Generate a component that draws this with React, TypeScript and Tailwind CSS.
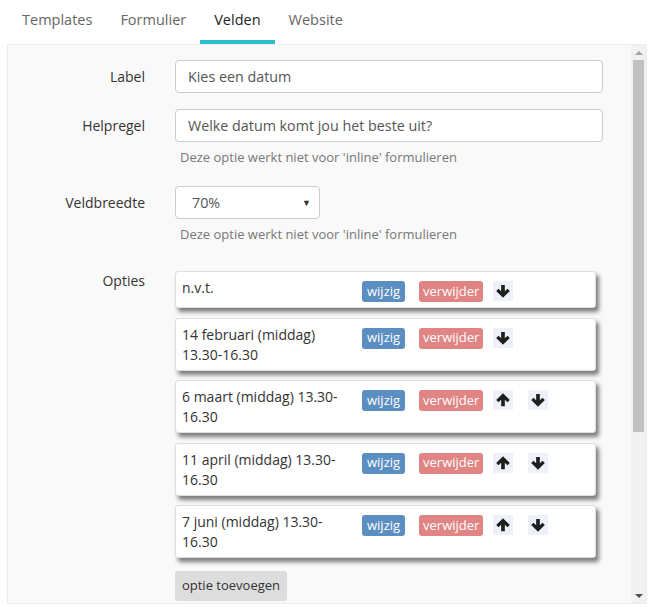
import React from 'react'

const tabs = ['Templates', 'Formulier', 'Velden', 'Website']

type Option = { text: string; up: boolean; down: boolean }

const options: Option[] = [
    { text: 'n.v.t.', up: false, down: true },
    { text: '14 februari (middag) 13.30-16.30', up: false, down: true },
    { text: '6 maart (middag) 13.30-16.30', up: true, down: true },
    { text: '11 april (middag) 13.30-16.30', up: true, down: true },
    { text: '7 juni (middag) 13.30-16.30', up: true, down: true },
]

const Arrow = ({ dir }: { dir: 'up' | 'down' }) => (
    <span className="flex h-[20px] w-[20px] items-center justify-center bg-[#eef2f8]">
        <svg width="14" height="14" viewBox="0 0 16 16" className={dir === 'up' ? 'rotate-180' : ''}>
            <path d="M5.9 1h4.2v7.3l3-3 2.7 2.7L8 15.8 0.2 8l2.7-2.7 3 3z" fill="#1f1f1f" />
        </svg>
    </span>
)

const Row = ({ label, children, top = 'pt-[7px]' }: { label: string; children: React.ReactNode; top?: string }) => (
    <div className="flex">
        <div className={`w-[137px] shrink-0 text-right text-[14px] leading-[20px] text-[#333] ${top}`}>{label}</div>
        <div className="ml-[30px] w-[428px]">{children}</div>
    </div>
)

const Help = () => (
    <p className="mt-[6px] pl-[5px] text-[13px] leading-[18px] text-[#777]">
        Deze optie werkt niet voor 'inline' formulieren
    </p>
)

const Input = ({ value }: { value: string }) => (
    <div className="flex h-[33px] items-center rounded-[4px] border border-[#ccc] bg-white px-[12px] text-[14.3px] text-[#555]">
        {value}
    </div>
)

const OptionCard = ({ opt }: { opt: Option }) => (
    <div className="flex w-[421px] rounded-[3px] border border-[#ddd] bg-white px-[6px] pt-[6px] pb-[5px] shadow-[3px_4px_4px_rgba(0,0,0,0.5)]">
        <div className="w-[170px] shrink-0 text-[14px] leading-[20px] text-[#333]">{opt.text}</div>
        <div className="ml-[10px] mt-[3px] flex items-start">
            <span className="flex h-[21px] items-center rounded-[3px] bg-[#5b8ec1] px-[5px] text-[13px] text-white">wijzig</span>
            <span className="ml-[14px] flex h-[21px] items-center rounded-[3px] bg-[#e08484] px-[4px] text-[13px] text-white">verwijder</span>
            <div className="ml-[10px] flex gap-[15px]">
                {opt.up && <Arrow dir="up" />}
                {opt.down && <Arrow dir="down" />}
            </div>
        </div>
    </div>
)

const App = () => {
    return (
        <div className="h-[607px] w-[652px] overflow-hidden bg-white font-['Open_Sans',sans-serif]">
            <div className="flex pl-[8px]">
                {tabs.map((t) => (
                    <div
                        key={t}
                        className={`h-[44px] border-b-[4px] px-[14px] pt-[10px] text-[14.5px] leading-[20px] ${t === 'Velden' ? 'border-[#2bbfcc] text-[#222]' : 'border-transparent text-[#666]'}`}
                    >
                        {t}
                    </div>
                ))}
            </div>
            <div className="ml-[7px] mr-[5px] flex h-[560px] border border-[#ececec] bg-[#f9f9f9]">
                <div className="flex-1 overflow-hidden pt-[15px]">
                    <Row label="Label">
                        <Input value="Kies een datum" />
                    </Row>
                    <div className="mt-[16px]">
                        <Row label="Helpregel">
                            <Input value="Welke datum komt jou het beste uit?" />
                            <Help />
                        </Row>
                    </div>
                    <div className="mt-[20px]">
                        <Row label="Veldbreedte">
                            <div className="flex h-[33px] w-[145px] items-center justify-between rounded-[4px] border border-[#ccc] bg-white pl-[16px] pr-[8px] text-[14.3px] text-[#555]">
                                <span>70%</span>
                                <span className="text-[9px] text-[#333]">▼</span>
                            </div>
                            <Help />
                        </Row>
                    </div>
                    <div className="mt-[28px]">
                        <Row label="Opties" top="pt-0">
                            <div className="flex flex-col gap-[9.5px]">
                                {options.map((o) => (
                                    <OptionCard key={o.text} opt={o} />
                                ))}
                            </div>
                            <button className="mt-[13px] h-[30px] w-[112px] rounded-[3px] bg-[#ddd] text-[13px] text-[#333]">
                                optie toevoegen
                            </button>
                        </Row>
                    </div>
                </div>
                <div className="flex w-[15px] flex-col items-center bg-[#f1f1f1]">
                    <div className="mt-[6px] h-0 w-0 border-x-[4px] border-b-[4px] border-x-transparent border-b-[#a3a3a3]" />
                    <div className="mt-[5px] h-[372px] w-[11px] bg-[#c1c1c1]" />
                    <div className="mt-auto mb-[5px] h-0 w-0 border-x-[4px] border-t-[4px] border-x-transparent border-t-[#505050]" />
                </div>
            </div>
        </div>
    )
}

export default App
